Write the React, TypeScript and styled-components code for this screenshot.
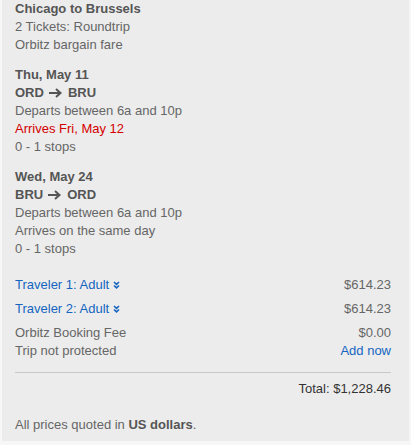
import styled, { createGlobalStyle } from 'styled-components';

const GlobalStyle = createGlobalStyle`
  body {
    margin: 0;
    background: #f7f7f7;
    font-family: "Liberation Sans", Arial, sans-serif;
  }
`;

const Panel = styled.div`
  margin-left: 2px;
  width: 407px;
  height: 441px;
  box-sizing: border-box;
  background: #ececec;
  padding: 0 18px 0 13px;
  font-size: 13px;
  line-height: 18px;
  color: #666;
`;

const Section = styled.div<{ $gap?: number }>`
  margin-top: ${p => p.$gap ?? 0}px;
`;

const Heading = styled.div`
  font-weight: bold;
  color: #555;
`;

const Line = styled.div<{ $red?: boolean }>`
  color: ${p => (p.$red ? '#d40000' : '#666')};
`;

const Row = styled.div<{ $gap?: number }>`
  display: flex;
  justify-content: space-between;
  margin-top: ${p => p.$gap ?? 0}px;
`;

const Link = styled.span`
  color: #1565c0;
  display: inline-flex;
  align-items: center;
  gap: 4px;
`;

const Price = styled.span`
  color: #666;
`;

const Divider = styled.hr`
  border: 0;
  border-top: 1px solid #c8c8c8;
  margin: 12px 0 0;
`;

const Total = styled.div`
  text-align: right;
  color: #333;
  margin-top: 7px;
`;

const Note = styled.div`
  margin-top: 18px;
  b {
    color: #555;
  }
`;

const Chevrons = () => (
  <svg width="7" height="8" viewBox="0 0 7 8">
    <path d="M1 1 L3.5 3.3 L6 1 M1 4.5 L3.5 6.8 L6 4.5" fill="none" stroke="#1565c0" strokeWidth="1.6" />
  </svg>
);

const Arrow = () => (
  <svg width="14" height="10" viewBox="0 0 14 10" style={{ margin: '0 5px', verticalAlign: '-1px' }}>
    <path d="M0 5 H11 M7 1 L11.5 5 L7 9" fill="none" stroke="#555" strokeWidth="2" />
  </svg>
);

export default function App() {
  return (
    <>
      <GlobalStyle />
      <Panel>
        <Section>
          <Heading>Chicago to Brussels</Heading>
          <Line>2 Tickets: Roundtrip</Line>
          <Line>Orbitz bargain fare</Line>
        </Section>
        <Section $gap={12}>
          <Heading>Thu, May 11</Heading>
          <Heading>ORD<Arrow />BRU</Heading>
          <Line>Departs between 6a and 10p</Line>
          <Line $red>Arrives Fri, May 12</Line>
          <Line>0 - 1 stops</Line>
        </Section>
        <Section $gap={12}>
          <Heading>Wed, May 24</Heading>
          <Heading>BRU<Arrow />ORD</Heading>
          <Line>Departs between 6a and 10p</Line>
          <Line>Arrives on the same day</Line>
          <Line>0 - 1 stops</Line>
        </Section>
        <Row $gap={18}>
          <Link>Traveler 1: Adult <Chevrons /></Link>
          <Price>$614.23</Price>
        </Row>
        <Row $gap={6}>
          <Link>Traveler 2: Adult <Chevrons /></Link>
          <Price>$614.23</Price>
        </Row>
        <Row $gap={6}>
          <span>Orbitz Booking Fee</span>
          <Price>$0.00</Price>
        </Row>
        <Row>
          <span>Trip not protected</span>
          <Link>Add now</Link>
        </Row>
        <Divider />
        <Total>Total: $1,228.46</Total>
        <Note>All prices quoted in <b>US dollars</b>.</Note>
      </Panel>
    </>
  );
}
